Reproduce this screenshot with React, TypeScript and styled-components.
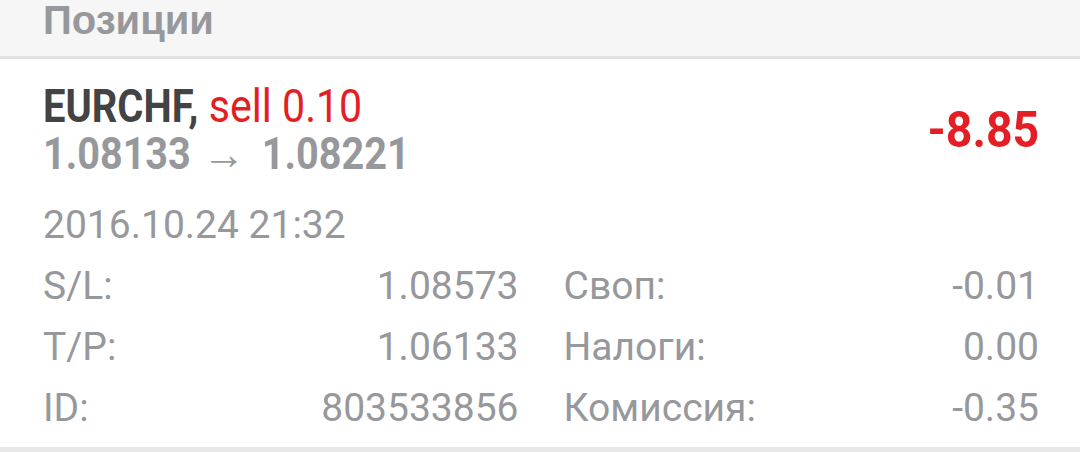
import React from "react";
import styled, { createGlobalStyle } from "styled-components";

const Global = createGlobalStyle`
  html, body { margin: 0; padding: 0; background: #ffffff; }
  body { font-family: Roboto, "Noto Sans", sans-serif; -webkit-font-smoothing: antialiased; }
`;

const GRAY = "#97989c";
const DARK = "#434343";
const RED = "#e31e24";

const Screen = styled.div`
  width: 1080px;
  height: 452px;
  overflow: hidden;
  background: #ffffff;
`;

const SectionHeader = styled.div`
  height: 56px;
  background: #f6f6f6;
  border-bottom: 3px solid #e3e3e3;
  padding-left: 43px;
  font-family: "Liberation Sans", Arial, sans-serif;
  font-weight: 700;
  font-size: 40px;
  line-height: 40px;
  color: ${GRAY};
`;

const Card = styled.div`
  padding: 23px 41px 0 43px;
  height: 365px;
  border-bottom: 5px solid #e8e8e8;
`;

const Summary = styled.div`
  display: flex;
  align-items: center;
  justify-content: space-between;
`;

const Lines = styled.div`
  display: flex;
  flex-direction: column;
`;

/* Roboto squeezed horizontally to stand in for Roboto Condensed */
const Condensed = styled.span<{ $scale: number; $origin?: "left" | "right" }>`
  display: inline-block;
  white-space: nowrap;
  transform: scaleX(${(p) => p.$scale});
  transform-origin: ${(p) => p.$origin ?? "left"} center;
`;

const Line = styled.div<{ $tone: "dark" | "gray"; $size: number }>`
  font-size: ${(p) => p.$size}px;
  line-height: 48px;
  font-weight: 700;
  color: ${(p) => (p.$tone === "dark" ? DARK : GRAY)};
  white-space: nowrap;
`;

const Side = styled.span`
  display: inline-block;
  margin-left: 12px;
  font-weight: 400;
  color: ${RED};
  transform: scaleX(1.03);
  transform-origin: left center;
`;

const Arrow = styled.span`
  display: inline-block;
  margin: 0 9px 0 4px;
  transform: scaleX(1.08);
`;

const Profit = styled.div`
  font-size: 50px;
  line-height: 48px;
  font-weight: 700;
  color: ${RED};
  text-align: right;
`;

const DateLine = styled.div`
  margin-top: 17px;
  font-size: 39px;
  line-height: 61px;
  color: ${GRAY};
`;

const Details = styled.div`
  display: grid;
  grid-template-columns: 1fr 1fr;
  column-gap: 45px;
`;

const Field = styled.div`
  display: flex;
  justify-content: space-between;
  font-size: 39px;
  line-height: 61px;
  color: ${GRAY};
`;

const rows: [string, string, string, string][] = [
  ["S/L:", "1.08573", "Своп:", "-0.01"],
  ["T/P:", "1.06133", "Налоги:", "0.00"],
  ["ID:", "803533856", "Комиссия:", "-0.35"],
];

export default function App() {
  return (
    <Screen>
      <Global />
      <SectionHeader>Позиции</SectionHeader>
      <Card>
        <Summary>
          <Lines>
            <Line $tone="dark" $size={46}>
              <Condensed $scale={0.868}>
                EURCHF,<Side>sell 0.10</Side>
              </Condensed>
            </Line>
            <Line $tone="gray" $size={44}>
              <Condensed $scale={0.9}>
                1.08133 <Arrow>→</Arrow> 1.08221
              </Condensed>
            </Line>
          </Lines>
          <Profit>
            <Condensed $scale={0.93} $origin="right">
              -8.85
            </Condensed>
          </Profit>
        </Summary>
        <DateLine>2016.10.24 21:32</DateLine>
        <Details>
          {rows.map(([l1, v1, l2, v2]) => (
            <React.Fragment key={l1}>
              <Field>
                <span>{l1}</span>
                <span>{v1}</span>
              </Field>
              <Field>
                <span>{l2}</span>
                <span>{v2}</span>
              </Field>
            </React.Fragment>
          ))}
        </Details>
      </Card>
    </Screen>
  );
}
